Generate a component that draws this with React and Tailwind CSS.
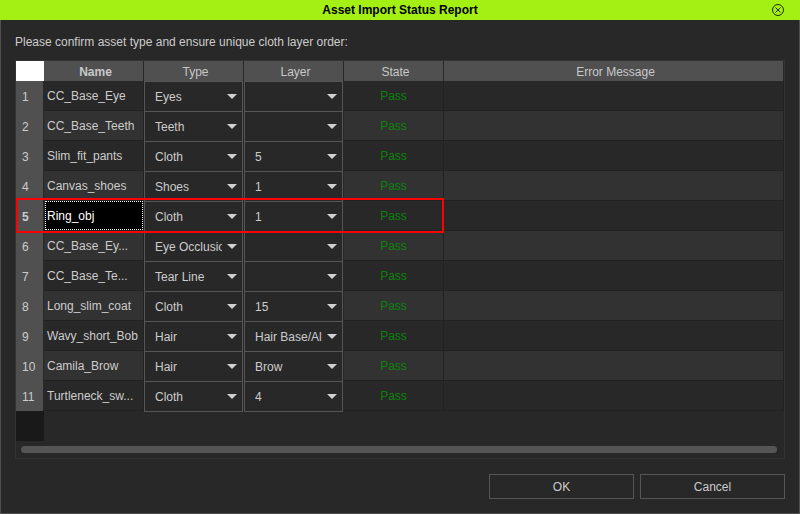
const TYPES = ["Eyes", "Teeth", "Cloth", "Shoes", "Eye Occlusion", "Tear Line", "Hair"];
const LAYERS = ["", "1", "4", "5", "15", "Hair Base/All", "Brow"];

const ASSETS = [
  { name: "CC_Base_Eye", type: "Eyes", layer: "" },
  { name: "CC_Base_Teeth", type: "Teeth", layer: "" },
  { name: "Slim_fit_pants", type: "Cloth", layer: "5" },
  { name: "Canvas_shoes", type: "Shoes", layer: "1" },
  { name: "Ring_obj", type: "Cloth", layer: "1", selected: true },
  { name: "CC_Base_Ey...", type: "Eye Occlusion", layer: "" },
  { name: "CC_Base_Te...", type: "Tear Line", layer: "" },
  { name: "Long_slim_coat", type: "Cloth", layer: "15" },
  { name: "Wavy_short_Bob", type: "Hair", layer: "Hair Base/All" },
  { name: "Camila_Brow", type: "Hair", layer: "Brow" },
  { name: "Turtleneck_sw...", type: "Cloth", layer: "4" },
];

function Combo({ label, value, options }) {
  return (
    <div className="relative -mb-px mr-px h-[31px]">
      <select
        aria-label={label}
        defaultValue={value}
        className="block h-full w-full appearance-none border border-[#555555] bg-[#282828] pr-5 pl-[10px] text-[12px] text-[#cccccc] outline-none"
      >
        {options.map((option) => (
          <option key={option} value={option}>
            {option}
          </option>
        ))}
      </select>
      <svg
        className="pointer-events-none absolute top-[13px] right-[6px] h-[5px] w-[10px]"
        viewBox="0 0 10 5"
        aria-hidden="true"
      >
        <path d="M0 0H10L5 5Z" fill="#d0d0d0" />
      </svg>
    </div>
  );
}

function HeaderCell({ children, bold }) {
  return (
    <th
      scope="col"
      className={`border-r border-[#282828] p-0 pt-[2px] pl-[4px] text-center text-[#c8c8c8] ${bold ? "font-bold" : "font-normal"}`}
    >
      {children}
    </th>
  );
}

function AssetRow({ asset, index }) {
  const shade = index % 2 === 1 ? "bg-[#323232]" : "bg-[#282828]";
  return (
    <tr className="h-[30px]">
      <th
        scope="row"
        className={`relative border-r border-[#282828] bg-[#505050] p-0 pt-[2px] pl-[6px] text-left ${asset.selected ? "font-bold" : "font-normal"}`}
      >
        {index + 1}
        {asset.selected && (
          <span className="pointer-events-none absolute -top-[3px] left-0 z-10 h-[35px] w-[428px] border-2 border-[#ff0000]" />
        )}
      </th>
      <td className={`border-r border-b border-[#222222] p-0 ${shade}`}>
        {asset.selected ? (
          <div className="ml-px h-[29px] border border-dotted border-white bg-black pt-px pl-px leading-[26px] text-white">
            {asset.name}
          </div>
        ) : (
          <div className="pt-px pl-[3px] leading-[28px] whitespace-nowrap">{asset.name}</div>
        )}
      </td>
      <td className="p-0 align-top">
        <Combo label={`Type of ${asset.name}`} value={asset.type} options={TYPES} />
      </td>
      <td className="p-0 align-top">
        <Combo label={`Layer of ${asset.name}`} value={asset.layer} options={LAYERS} />
      </td>
      <td className={`border-r border-b border-[#222222] p-0 text-center text-[#0c820c] ${shade}`}>Pass</td>
      <td className={`border-r border-b border-[#222222] p-0 ${shade}`} />
    </tr>
  );
}

export default function App() {
  return (
    <div className="flex min-h-screen flex-col bg-[#282828] font-['Liberation_Sans',Arial,sans-serif] text-[12px] text-[#cccccc]">
      <header className="relative flex h-5 items-center justify-center bg-[#a4ef14] text-black">
        <h1 className="font-bold">Asset Import Status Report</h1>
        <button type="button" aria-label="Close" className="absolute top-1 right-4">
          <svg className="block size-3" viewBox="0 0 12 12" fill="none" stroke="#203000" aria-hidden="true">
            <circle cx="6" cy="6" r="5.5" />
            <path d="M3.5 3.5L8.5 8.5M8.5 3.5L3.5 8.5" />
          </svg>
        </button>
      </header>

      <main className="flex flex-1 flex-col border border-t-0 border-[#505050] px-[14px] pb-[14px]">
        <p className="h-10 pt-[2px] leading-10">Please confirm asset type and ensure unique cloth layer order:</p>

        <div className="border border-[#333333]">
          <table className="w-full table-fixed border-separate border-spacing-0">
            <colgroup>
              <col className="w-7" />
              <col className="w-[100px]" />
              <col className="w-[100px]" />
              <col className="w-[100px]" />
              <col className="w-[100px]" />
              <col />
            </colgroup>
            <thead>
              <tr className="h-5 bg-[#505050]">
                <td className="bg-white p-0" />
                <HeaderCell bold>Name</HeaderCell>
                <HeaderCell>Type</HeaderCell>
                <HeaderCell>Layer</HeaderCell>
                <HeaderCell>State</HeaderCell>
                <HeaderCell>Error Message</HeaderCell>
              </tr>
            </thead>
            <tbody>
              {ASSETS.map((asset, index) => (
                <AssetRow key={index} asset={asset} index={index} />
              ))}
            </tbody>
          </table>
          <div className="h-[30px] w-7 bg-[#191919]" />
          <div className="px-[5px] pt-[5px] pb-[5px]">
            <div className="mr-[2px] h-[7px] rounded-full bg-[#555555]" />
          </div>
        </div>

        <div className="mt-[15px] flex justify-end gap-[6px]">
          <button type="button" className="h-[25px] w-[145px] border border-[#555555]">
            OK
          </button>
          <button type="button" className="h-[25px] w-[145px] border border-[#555555]">
            Cancel
          </button>
        </div>
      </main>
    </div>
  );
}
